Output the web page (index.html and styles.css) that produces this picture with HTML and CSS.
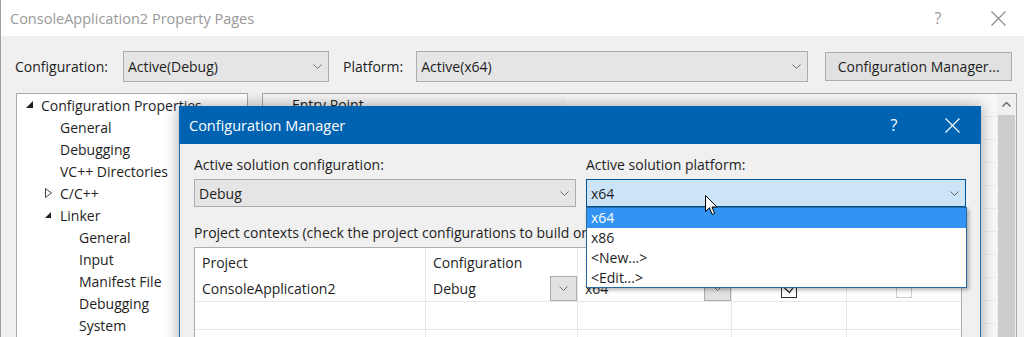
FILE: index.html
```html
<!DOCTYPE html>
<html lang="en">
<head>
  <meta charset="UTF-8">
  <title>ConsoleApplication2 Property Pages</title>
  <link rel="stylesheet" href="styles.css">
</head>
<body>
  <div class="window">
    <div class="titlebar">
      <span class="title">ConsoleApplication2 Property Pages</span>
      <span class="caption-btn help">?</span>
      <span class="caption-btn close">
        <svg width="15" height="15" viewBox="0 0 15 15"><path d="M0.5 0.5 L14.5 14.5 M14.5 0.5 L0.5 14.5" stroke="#8a8a8a" stroke-width="1.1"/></svg>
      </span>
    </div>

    <div class="toolbar">
      <span class="lbl">Configuration:</span>
      <div class="combo combo-config">
        <span>Active(Debug)</span>
        <svg class="chev" width="9" height="5" viewBox="0 0 9 5"><polyline points="0.5,0.5 4.5,4.5 8.5,0.5" fill="none" stroke="#707070"/></svg>
      </div>
      <span class="lbl lbl-platform">Platform:</span>
      <div class="combo combo-platform">
        <span>Active(x64)</span>
        <svg class="chev" width="9" height="5" viewBox="0 0 9 5"><polyline points="0.5,0.5 4.5,4.5 8.5,0.5" fill="none" stroke="#707070"/></svg>
      </div>
      <button class="btn">Configuration Manager...</button>
    </div>

    <div class="panes">
      <ul class="tree">
        <li class="lvl0"><span class="tog"><svg width="8" height="8" viewBox="0 0 8 8"><polygon points="7,0 7,7 0,7" fill="#1e1e1e"/></svg></span>Configuration Properties</li>
        <li class="lvl1"><span class="tog"></span>General</li>
        <li class="lvl1"><span class="tog"></span>Debugging</li>
        <li class="lvl1"><span class="tog"></span>VC++ Directories</li>
        <li class="lvl1"><span class="tog"><svg width="8" height="10" viewBox="0 0 8 10"><polygon points="0.5,0.5 6.5,5 0.5,9.5" fill="none" stroke="#444"/></svg></span>C/C++</li>
        <li class="lvl1"><span class="tog"><svg width="7" height="7" viewBox="0 0 7 7"><polygon points="6,0 6,6 0,6" fill="#1e1e1e"/></svg></span>Linker</li>
        <li class="lvl2"><span class="tog"></span>General</li>
        <li class="lvl2"><span class="tog"></span>Input</li>
        <li class="lvl2"><span class="tog"></span>Manifest File</li>
        <li class="lvl2"><span class="tog"></span>Debugging</li>
        <li class="lvl2"><span class="tog"></span>System</li>
      </ul>

      <div class="grid">
        <div class="grid-rows">
          <div class="grid-row"><span class="name">Entry Point</span><span class="value"></span></div>
          <div class="grid-row"><span class="name">No Entry Point</span><span class="value"></span></div>
          <div class="grid-row"><span class="name">Set Checksum</span><span class="value"></span></div>
          <div class="grid-row"><span class="name">Base Address</span><span class="value"></span></div>
          <div class="grid-row"><span class="name">Randomized Base Address</span><span class="value"></span></div>
          <div class="grid-row"><span class="name">Fixed Base Address</span><span class="value"></span></div>
          <div class="grid-row"><span class="name">Data Execution Prevention</span><span class="value"></span></div>
          <div class="grid-row"><span class="name">Turn Off Assembly Generation</span><span class="value"></span></div>
          <div class="grid-row"><span class="name">Unload delay loaded DLL</span><span class="value"></span></div>
          <div class="grid-row"><span class="name">Nobind delay loaded DLL</span><span class="value"></span></div>
          <div class="grid-row"><span class="name">Import Library</span><span class="value"></span></div>
        </div>
        <div class="scrollbar">
          <div class="sb-arrow">
            <svg width="9" height="5" viewBox="0 0 9 5"><polyline points="0.5,4.5 4.5,0.5 8.5,4.5" fill="none" stroke="#606060" stroke-width="1.3"/></svg>
          </div>
          <div class="sb-thumb"></div>
        </div>
      </div>
    </div>

    <!-- Configuration Manager dialog on top of the property pages -->
    <div class="dialog">
      <div class="dlg-title">
        <span class="title">Configuration Manager</span>
        <span class="caption-btn help">?</span>
        <span class="caption-btn close">
          <svg width="15" height="15" viewBox="0 0 15 15"><path d="M0.5 0.5 L14.5 14.5 M14.5 0.5 L0.5 14.5" stroke="#fff" stroke-width="1.1"/></svg>
        </span>
      </div>
      <div class="dlg-body">
        <div class="active-row">
          <div class="field">
            <span class="lbl">Active solution configuration:</span>
            <div class="combo combo-grey">
              <span>Debug</span>
              <svg class="chev" width="9" height="5" viewBox="0 0 9 5"><polyline points="0.5,0.5 4.5,4.5 8.5,0.5" fill="none" stroke="#707070"/></svg>
            </div>
          </div>
          <div class="field">
            <span class="lbl">Active solution platform:</span>
            <div class="combo combo-focus">
              <span>x64</span>
              <svg class="chev" width="9" height="5" viewBox="0 0 9 5"><polyline points="0.5,0.5 4.5,4.5 8.5,0.5" fill="none" stroke="#606060"/></svg>
            </div>
          </div>
        </div>

        <span class="lbl contexts">Project contexts (check the project configurations to build or deploy):</span>
        <div class="ctx-table">
          <div class="ctx-row head">
            <span>Project</span>
            <span>Configuration</span>
            <span>Platform</span>
            <span class="center">Build</span>
            <span class="center">Deploy</span>
          </div>
          <div class="ctx-row">
            <span>ConsoleApplication2</span>
            <span class="cell-combo">Debug<i class="drop"><svg width="9" height="5" viewBox="0 0 9 5"><polyline points="0.5,0.5 4.5,4.5 8.5,0.5" fill="none" stroke="#707070"/></svg></i></span>
            <span class="cell-combo">x64<i class="drop"><svg width="9" height="5" viewBox="0 0 9 5"><polyline points="0.5,0.5 4.5,4.5 8.5,0.5" fill="none" stroke="#707070"/></svg></i></span>
            <span class="center"><i class="check on"><svg width="11" height="9" viewBox="0 0 11 9"><polyline points="0.5,3 5.5,7.5 10.5,0.5" fill="none" stroke="#222" stroke-width="1.2"/></svg></i></span>
            <span class="center"><i class="check off"></i></span>
          </div>
          <div class="ctx-row"><span></span><span></span><span></span><span></span><span></span></div>
          <div class="ctx-row"><span></span><span></span><span></span><span></span><span></span></div>
        </div>
      </div>

      <ul class="droplist">
        <li class="sel">x64</li>
        <li>x86</li>
        <li>&lt;New...&gt;</li>
        <li>&lt;Edit...&gt;</li>
      </ul>
    </div>

    <svg class="cursor" width="13" height="21" viewBox="0 0 13 21">
      <path d="M0.5 0.5 L0.5 16.5 L4.5 12.8 L7.2 19.5 L9.6 18.5 L7 12 L12 12 Z" fill="#fff" stroke="#000" stroke-width="1" stroke-linejoin="miter"/>
    </svg>
  </div>
</body>
</html>
```

FILE: styles.css
```css
* {
  box-sizing: border-box;
}
body {
  margin: 0;
  font-family: "Open Sans", "Noto Sans", sans-serif;
  font-size: 14px;
  color: #1e1e1e;
  background: #f0f0f0;
}
ul {
  list-style: none;
  margin: 0;
  padding: 0;
}
.window {
  position: relative;
  width: 1024px;
  height: 337px;
  overflow: hidden;
  background: #f0f0f0;
  border-left: 1px solid #a0a0a0;
}

/* title bar */
.titlebar {
  display: flex;
  align-items: center;
  height: 36px;
  background: #fff;
  padding-left: 9px;
}
.titlebar .title {
  flex: 1;
  color: #9a9a9a;
  font-size: 14.5px;
}
.caption-btn {
  display: flex;
  align-items: center;
  justify-content: center;
  width: 52px;
  height: 100%;
}
.titlebar .help {
  color: #9a9a9a;
  font-size: 16px;
  margin-right: 8px;
}

/* toolbar */
.toolbar {
  display: flex;
  align-items: flex-start;
  padding: 15px 0 0 14px;
  height: 46px;
}
.toolbar .lbl {
  line-height: 31px;
}
.combo {
  display: flex;
  align-items: center;
  justify-content: space-between;
  border: 1px solid #adadad;
  background: #e5e5e5;
  padding: 0 6px 0 4px;
  height: 31px;
}
.combo-config {
  width: 206px;
  margin-left: 15px;
}
.lbl-platform {
  margin-left: 14px;
}
.combo-platform {
  width: 392px;
  margin-left: 13px;
}
.btn {
  width: 187px;
  height: 29px;
  margin: 1px 0 0 17px;
  border: 1px solid #adadad;
  background: #e1e1e1;
  font-family: inherit;
  font-size: 14px;
  color: #1e1e1e;
  padding: 0;
}

/* panes */
.panes {
  display: flex;
  margin-top: 11px;
  padding-left: 15px;
  gap: 14px;
}
.tree {
  width: 232px;
  height: 260px;
  background: #fff;
  border: 1px solid #a9a9a9;
}
.tree li {
  display: flex;
  align-items: center;
  height: 22px;
  white-space: nowrap;
}
.tree .lvl0 { padding-left: 9px; }
.tree .lvl1 { padding-left: 28px; }
.tree .lvl2 { padding-left: 47px; }
.tog {
  display: flex;
  align-items: center;
  width: 15px;
  flex: none;
}
.grid {
  display: flex;
  width: 755px;
  height: 260px;
  background: #fff;
  border: 1px solid #a9a9a9;
}
.grid-rows {
  flex: 1;
}
.grid-row {
  display: flex;
  height: 23px;
  border-bottom: 1px solid #ececec;
  line-height: 22px;
}
.grid-row .name {
  width: 302px;
  padding-left: 29px;
  background: #f4f4f4;
  border-right: 1px solid #ececec;
}
.grid-row .value {
  flex: 1;
  background: #f8f8f8;
}
.scrollbar {
  width: 19px;
  background: #f0f0f0;
  display: flex;
  flex-direction: column;
}
.sb-arrow {
  display: flex;
  justify-content: center;
  align-items: center;
  height: 21px;
}
.sb-thumb {
  flex: 1;
  margin: 0 1px;
  background: #cdcdcd;
}

/* dialog */
.dialog {
  position: absolute;
  left: 178px;
  top: 106px;
  width: 802px;
  height: 260px;
  background: #f0f0f0;
  border: 1px solid #2d6fae;
  border-top: none;
  box-shadow: 0 0 14px rgba(0, 0, 0, 0.35);
}
.dlg-title {
  display: flex;
  align-items: center;
  height: 38px;
  background: #0063b1;
  padding-left: 10px;
  margin: 0 -1px;
}
.dlg-title .title {
  flex: 1;
  color: #fff;
  font-size: 14.5px;
}
.dlg-title .caption-btn {
  width: 58px;
  color: #fff;
  font-size: 16px;
}
.dlg-body {
  padding: 11px 0 0 14px;
}
.active-row {
  display: grid;
  grid-template-columns: 382px 380px;
  gap: 10px;
}
.field {
  display: flex;
  flex-direction: column;
  gap: 4px;
}
.field .lbl {
  line-height: 20px;
}
.field .combo {
  height: 28px;
}
.combo-grey {
  background: #e5e5e5;
}
.combo-focus {
  background: #cce4f7;
  border-color: #005499;
}
.contexts {
  display: block;
  margin-top: 16px;
  line-height: 20px;
  white-space: nowrap;
}
.ctx-table {
  margin-top: 4px;
  width: 768px;
  background: #fff;
  border: 1px solid #adadad;
}
.ctx-row {
  display: grid;
  grid-template-columns: 231px 152px 154px 115px 114px;
  height: 28px;
  border-bottom: 1px solid #e8e8e8;
}
.ctx-row.head {
  border-bottom: none;
}
.ctx-row:nth-child(2) {
  height: 26px;
}
.ctx-row span {
  display: flex;
  align-items: center;
  padding-left: 7px;
  border-right: 1px solid #e8e8e8;
  white-space: nowrap;
}
.ctx-row span:last-child {
  border-right: none;
}
.ctx-row .center {
  justify-content: center;
  padding-left: 0;
}
.cell-combo {
  justify-content: space-between;
}
.drop {
  display: flex;
  align-items: center;
  justify-content: center;
  width: 27px;
  height: 100%;
  background: #e1e1e1;
  border: 1px solid #adadad;
}
.check {
  display: flex;
  align-items: center;
  justify-content: center;
  width: 16px;
  height: 16px;
  margin-top: 2px;
}
.check.on {
  border: 1px solid #333;
  background: #fff;
}
.check.off {
  border: 1px solid #cfcfcf;
}

/* open drop-down of the platform combo */
.droplist {
  position: absolute;
  left: 406px;
  top: 101px;
  width: 381px;
  height: 81px;
  background: #fff;
  border: 1px solid #2a6aa3;
  box-shadow: 2px 2px 4px rgba(0, 0, 0, 0.3);
}
.droplist li {
  height: 20px;
  line-height: 20px;
  padding-left: 4px;
}
.droplist .sel {
  background: #3393f3;
  color: #fff;
}

.cursor {
  position: absolute;
  left: 704px;
  top: 195px;
}
```
